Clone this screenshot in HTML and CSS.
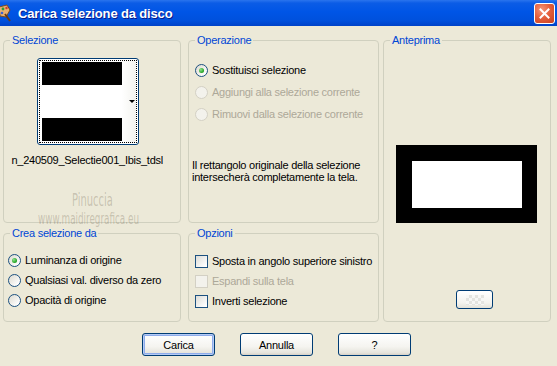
FILE: index.html
```html
<!DOCTYPE html>
<html lang="it">
<head>
    <meta charset="UTF-8">
    <title>Carica selezione da disco</title>
    <link rel="stylesheet" href="styles.css">
</head>
<body>
<div class="dialog">

    <div class="titlebar">
        <svg class="app-icon" width="14" height="18" viewBox="0 0 14 18">
            <path d="M1 3 L9 1 L12 6 L8 13 L2 12 Z" fill="#e8b070" stroke="#7a4a20" stroke-width="1"/>
            <circle cx="5" cy="5" r="1.4" fill="#2f9a3a"/>
            <circle cx="8.5" cy="4" r="1.2" fill="#d83a2a"/>
            <circle cx="4" cy="9" r="1.3" fill="#3a62d0"/>
            <path d="M7 10 L12 17" stroke="#6b3c12" stroke-width="2"/>
        </svg>
        <span class="title-text">Carica selezione da disco</span>
        <div class="close-btn">
            <svg width="11" height="11" viewBox="0 0 11 11">
                <path d="M1.5 1.5 L9.5 9.5 M9.5 1.5 L1.5 9.5" stroke="#fff" stroke-width="2" stroke-linecap="square"/>
            </svg>
        </div>
    </div>

    <div class="content">
        <div class="groups">

            <fieldset class="group g-sel">
                <legend>Selezione</legend>
                <div class="thumb">
                    <div class="thumb-focus">
                        <div class="thumb-img">
                            <div class="bar-black"></div>
                            <div class="bar-white"></div>
                            <div class="bar-black"></div>
                        </div>
                        <span class="thumb-arrow"></span>
                    </div>
                </div>
                <div class="file-name"><span>n_240509_Selectie001_Ibis_tdsl</span></div>
            </fieldset>

            <fieldset class="group g-op">
                <legend>Operazione</legend>
                <div class="op-list">
                    <div class="opt"><span class="radio on"><i></i></span>Sostituisci selezione</div>
                    <div class="opt off"><span class="radio"></span>Aggiungi alla selezione corrente</div>
                    <div class="opt off"><span class="radio"></span>Rimuovi dalla selezione corrente</div>
                </div>
                <p class="op-note">Il rettangolo originale della selezione<br>intersecherà completamente la tela.</p>
            </fieldset>

            <fieldset class="group g-prev">
                <legend>Anteprima</legend>
                <div class="preview"></div>
                <div class="small-btn"><span class="checker"></span></div>
            </fieldset>

            <fieldset class="group g-crea">
                <legend>Crea selezione da</legend>
                <div class="crea-list">
                    <div class="opt row20"><span class="radio on"><i></i></span>Luminanza di origine</div>
                    <div class="opt row20"><span class="radio"></span>Qualsiasi val. diverso da zero</div>
                    <div class="opt row20"><span class="radio"></span>Opacità di origine</div>
                </div>
            </fieldset>

            <fieldset class="group g-opz">
                <legend>Opzioni</legend>
                <div class="opz-list">
                    <div class="opt row20"><span class="check"></span>Sposta in angolo superiore sinistro</div>
                    <div class="opt row20 off"><span class="check"></span>Espandi sulla tela</div>
                    <div class="opt row20"><span class="check"></span>Inverti selezione</div>
                </div>
            </fieldset>

        </div>

        <div class="buttons">
            <div class="btn default">Carica</div>
            <div class="btn">Annulla</div>
            <div class="btn">?</div>
        </div>
    </div>

    <!-- filigrana sopra il dialogo -->
    <div class="wm wm-name">Pinuccia</div>
    <div class="wm wm-site">www.maidiregrafica.eu</div>
</div>
</body>
</html>
```

FILE: styles.css
```css
body {
    margin: 0;
    font-family: "Liberation Sans", Arial, sans-serif;
    font-size: 11px;
    letter-spacing: -0.25px;
    color: #000;
}

.dialog {
    position: relative;
    width: 557px;
    height: 366px;
    background-color: #ece9d8;
    overflow: hidden;
}

/* Barra del titolo */
.titlebar {
    display: flex;
    align-items: center;
    height: 26px;
    background: linear-gradient(to bottom, #2a74ee 0%, #0b5ce6 12%, #0055e6 45%, #0050dc 80%, #0043c8 100%);
}

.app-icon {
    margin-left: -2px;
}

.title-text {
    margin-left: 6px;
    color: #fff;
    font-weight: bold;
    font-size: 13px;
    letter-spacing: -0.15px;
    text-shadow: 1px 1px 0 #0a1a8a;
}

.close-btn {
    display: flex;
    align-items: center;
    justify-content: center;
    margin-left: auto;
    margin-right: 2px;
    width: 21px;
    height: 21px;
    box-sizing: border-box;
    border: 1px solid #fff;
    border-radius: 3px;
    background: radial-gradient(circle at 35% 30%, #f4957a 0%, #e5603d 45%, #c8401f 100%);
}

/* Contenuto */
.content {
    padding: 8px 0 0 3px;
}

.groups {
    display: grid;
    grid-template-columns: 178px 198px 172px;
    grid-template-rows: 189px 95px;
    row-gap: 4px;
}

.group {
    margin: 0;
    padding: 0;
    min-width: 0;
    box-sizing: border-box;
    border: 1px solid #d0d0bf;
    border-radius: 4px;
}

.group legend {
    margin-left: 6px;
    padding: 0 2px;
    line-height: 13px;
    color: #0046d5;
}

.g-sel { grid-column: 1; grid-row: 1; }
.g-op { grid-column: 2; grid-row: 1; margin-left: 7px; }
.g-prev { grid-column: 3; grid-row: 1 / 3; margin-left: 4px; }
.g-crea { grid-column: 1; grid-row: 2; }
.g-opz { grid-column: 2; grid-row: 2; margin-left: 7px; }

/* Miniatura selezione */
.thumb {
    width: 102px;
    height: 87px;
    margin: 11px 0 0 33px;
    box-sizing: border-box;
    padding: 1px;
    border: 1px solid #003c74;
    border-radius: 3px;
    background-color: #fff;
}

.thumb-focus {
    display: flex;
    align-items: center;
    height: 100%;
    box-sizing: border-box;
    padding-left: 2px;
    border: 1px dotted #000;
    background: linear-gradient(to right, #fff 85%, #f3f3ef 100%);
}

.thumb-img {
    display: grid;
    grid-template-rows: 23px 33px 23px;
    width: 80px;
}

.bar-black { background-color: #000; }
.bar-white { background-color: #fff; }

.thumb-arrow {
    margin-left: auto;
    margin-right: 1px;
    width: 0;
    height: 0;
    border-left: 3px solid transparent;
    border-right: 3px solid transparent;
    border-top: 3px solid #000;
}

.file-name {
    display: flex;
    justify-content: flex-end;
    width: 154px;
    margin: 9px 0 0 5px;
    white-space: nowrap;
    overflow: hidden;
    line-height: 13px;
}

/* Opzioni radio / checkbox */
.op-list {
    padding: 12px 0 0 6px;
}

.opt {
    display: flex;
    align-items: center;
    gap: 4px;
    height: 22px;
    white-space: nowrap;
}

.opt.row20 {
    height: 20px;
}

.opt.off {
    color: #aca899;
}

.radio {
    display: flex;
    align-items: center;
    justify-content: center;
    width: 13px;
    height: 13px;
    flex: none;
    box-sizing: border-box;
    border: 1px solid #1c5180;
    border-radius: 50%;
    background: linear-gradient(135deg, #dcd9ce 0%, #fff 85%);
}

.radio i {
    width: 5px;
    height: 5px;
    border-radius: 50%;
    background: radial-gradient(circle at 35% 35%, #8de38d 0%, #21a121 70%, #1a861a 100%);
}

.opt.off .radio,
.opt.off .check {
    border-color: #d3d0c4;
    background: #f3f2ec;
}

.check {
    width: 13px;
    height: 13px;
    flex: none;
    box-sizing: border-box;
    border: 1px solid #1c5180;
    background: linear-gradient(135deg, #dcdcd7 0%, #fff 90%);
}

.op-note {
    margin: 34px 0 0 3px;
    line-height: 12px;
}

.crea-list {
    padding: 10px 0 0 4px;
}

.opz-list {
    padding: 11px 0 0 6px;
}

/* Anteprima */
.g-prev {
    display: flex;
    flex-direction: column;
    align-items: flex-start;
}

.preview {
    width: 141px;
    height: 78px;
    margin: 98px 0 0 12px;
    box-sizing: border-box;
    border-style: solid;
    border-color: #000;
    border-width: 16px 15px 15px 16px;
    background-color: #fff;
}

.small-btn {
    display: flex;
    align-items: center;
    justify-content: center;
    width: 37px;
    height: 19px;
    margin: 67px 0 0 72px;
    box-sizing: border-box;
    border: 1px solid #003c74;
    border-radius: 3px;
    background: linear-gradient(to bottom, #fff 0%, #f4f3ee 70%, #e3e1d8 100%);
}

.checker {
    width: 18px;
    height: 10px;
    background-color: #f7f7f5;
    background-image:
        linear-gradient(45deg, #e4e4e0 25%, transparent 25%, transparent 75%, #e4e4e0 75%),
        linear-gradient(45deg, #e4e4e0 25%, transparent 25%, transparent 75%, #e4e4e0 75%);
    background-size: 6px 6px;
    background-position: 0 0, 3px 3px;
}

/* Pulsanti */
.buttons {
    display: flex;
    gap: 25px;
    margin-top: 11px;
    padding-left: 139px;
}

.btn {
    display: flex;
    align-items: center;
    justify-content: center;
    width: 73px;
    height: 23px;
    box-sizing: border-box;
    border: 1px solid #003c74;
    border-radius: 3px;
    background: linear-gradient(to bottom, #fff 0%, #f5f4f0 60%, #e6e4dc 90%, #d6d0c5 100%);
}

.btn.default {
    box-shadow: inset 0 0 0 1px #b5cbf5, inset 0 0 0 2px #8eaceb;
}

/* Filigrana */
.wm {
    position: absolute;
    font-family: "DejaVu Sans", sans-serif;
    color: rgba(110, 100, 80, 0.3);
    line-height: 1;
    letter-spacing: 0;
    transform-origin: left top;
}

.wm-name {
    left: 72px;
    top: 191px;
    font-size: 18px;
    transform: scaleX(0.55);
}

.wm-site {
    left: 38px;
    top: 211px;
    font-size: 16px;
    transform: scaleX(0.55);
}
```
